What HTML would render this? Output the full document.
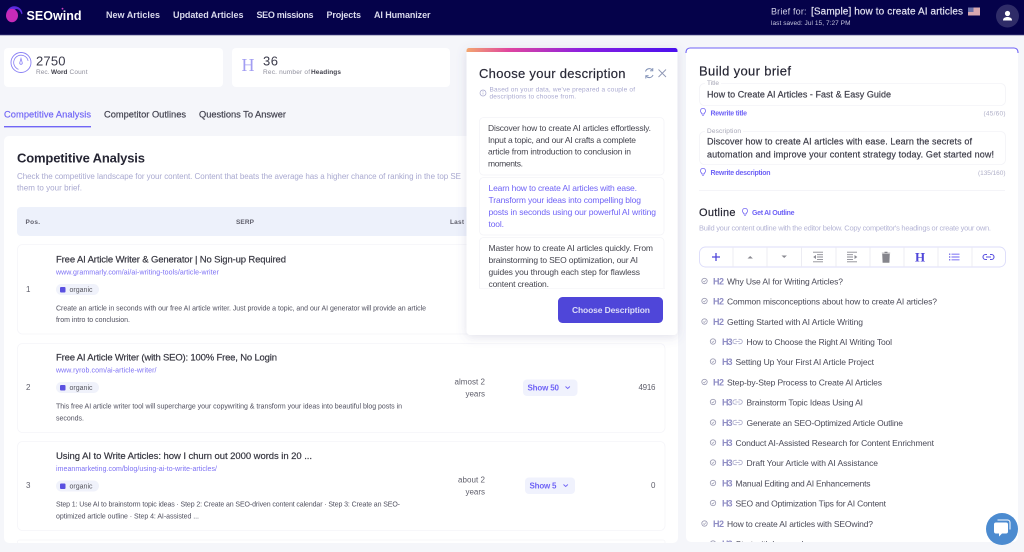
<!DOCTYPE html>
<html lang="en"><head><meta charset="utf-8"><title>SEOwind Brief</title>
<style>
html,body{margin:0;padding:0;width:1024px;height:552px;overflow:hidden;background:#f5f6fa}
svg{display:block;font-family:"Liberation Sans",sans-serif;filter:blur(.25px)}
text{white-space:pre}
.m{stroke-width:.18}
.nav{font-size:9px;font-weight:700;fill:#d9d9ec}
.d{font-size:7px;fill:#50505f}
.u{font-size:7px;fill:#7c70f4}
.t{font-size:9.5px;fill:#35353f;stroke:#35353f}
.o{font-size:8.5px;fill:#45454f}
.op{font-size:8.5px;fill:#6f63f6}
.li{font-size:8.5px;fill:#4a4a58}
.h{font-size:9px;font-weight:700;fill:#8f8dc4}
.g{font-size:7px;fill:#56565f}
.r{font-size:8px;fill:#60606c}
.lb{font-size:6.5px;fill:#a5a5b5}
.p{font-size:7px;font-weight:700;fill:#6f63f6}
.c{font-size:6.5px;fill:#b0b0c8}
</style></head><body>
<svg width="1024" height="552" viewBox="0 0 1024 552" xmlns="http://www.w3.org/2000/svg">
<defs>
<linearGradient id="gr" x1="0" x2="1" y1="0" y2="0"><stop offset="0" stop-color="#f3a66e"/><stop offset=".2" stop-color="#e0459f"/><stop offset=".55" stop-color="#8a1fe0"/><stop offset="1" stop-color="#4a10ee"/></linearGradient>
<clipPath id="cp"><rect x="686" y="48" width="332" height="494"/></clipPath>
<clipPath id="co"><rect x="478" y="236" width="188" height="52"/></clipPath>
<filter id="sh" x="-20%" y="-20%" width="140%" height="140%"><feDropShadow dx="0" dy="2" stdDeviation="5" flood-color="#6a6a9a" flood-opacity=".2"/></filter>
<g id="ck"><circle r="2.7" fill="none" stroke="#9a9ab2" stroke-width=".8"/><path d="M-1.2 .1l.9 .9 1.6-1.8" fill="none" stroke="#9a9ab2" stroke-width=".7"/></g>
<g id="ln"><path d="M3.2-2.2H1.6a2.2 2.2 0 0 0 0 4.4h1.6M5-2.2h1.6a2.2 2.2 0 0 1 0 4.4H5M2-0h4.2" fill="none" stroke="#a8a8c8" stroke-width=".8"/></g>
<g id="bl"><path d="M0-3.6a2.5 2.5 0 0 0-1.4 4.6v.9h2.8v-.9A2.5 2.5 0 0 0 0-3.6zM-1 3.2h2" fill="none" stroke="#7c70f4" stroke-width=".8"/></g>
<g id="og"><rect width="43" height="11" rx="5.5" fill="#f0f2fb"/><rect x="4" y="3" width="5.5" height="5.5" rx="1" fill="#5a50e0"/><text x="13.500" y="8" class="g" textLength="23">organic</text></g>
</defs>

<rect width="1024" height="552" fill="#f5f6fa"/>

<!-- header -->
<rect width="1024" height="35" fill="#05024a"/>
<rect y="34.500" width="1024" height=".8" fill="#3a3878"/>
<path d="M6.500 15a8 8 0 0 1 16-1.500l-1 .8c-1-3.500-3-5.300-5.500-5.300z" fill="#5a2be0"/>
<ellipse cx="12" cy="15.500" rx="6" ry="6.700" fill="#c62bb8"/>
<circle cx="62.500" cy="8.700" r=".9" fill="#d040c0"/>
<text x="26.500" y="20" font-size="12.500" font-weight="700" fill="#fff" textLength="55">SEOwind</text>
<text x="106" y="18" class="nav" textLength="54">New Articles</text>
<text x="173" y="18" class="nav" textLength="70.500">Updated Articles</text>
<text x="256.500" y="18" class="nav" textLength="57">SEO missions</text>
<text x="326.500" y="18" class="nav" textLength="34.500">Projects</text>
<text x="374" y="18" class="nav" textLength="56.500">AI Humanizer</text>
<text x="771" y="14.500" font-size="9" fill="#cfcfe6" textLength="35.500">Brief for:</text>
<text x="811" y="14.500" font-size="10" fill="#e4e4f2" stroke="#e4e4f2" class="m" textLength="152">[Sample] how to create AI articles</text>
<rect x="968" y="7.500" width="12" height="8" fill="#d8a8b0"/>
<rect x="968" y="7.500" width="5.500" height="4.500" fill="#6a70a8"/>
<text x="771" y="25" font-size="6.500" fill="#c5c5de" textLength="79.500">last saved: Jul 15, 7:27 PM</text>
<circle cx="1007.500" cy="16" r="11.500" fill="#2f2c68"/>
<circle cx="1007.500" cy="13.500" r="2.600" fill="#fff"/>
<path d="M1003 20.500c0-2.500 2-3.500 4.500-3.500s4.500 1 4.500 3.500z" fill="#fff"/>

<!-- stat cards -->
<rect x="4" y="48" width="219" height="39" rx="4" fill="#fff"/>
<rect x="232" y="48" width="218" height="39" rx="4" fill="#fff"/>
<circle cx="21" cy="62.500" r="10" fill="none" stroke="#8a80f5" stroke-width=".9"/>
<circle cx="21" cy="62.500" r="7.300" fill="none" stroke="#8a80f5" stroke-width=".8" stroke-dasharray="30 16" transform="rotate(110 21 62.500)"/>
<path d="M21 58.500l1.300 4.500a1.300 1.300 0 0 1-2.600 0z" fill="none" stroke="#8a80f5" stroke-width=".8"/>
<text x="36" y="65.500" font-size="13" fill="#3a3a4a" textLength="29.500">2750</text>
<text x="36" y="74" font-size="6.500" fill="#8f8f9c" textLength="13.500">Rec.</text>
<text x="51" y="74" font-size="6.500" font-weight="700" fill="#44444f" textLength="16.500">Word</text>
<text x="69.500" y="74" font-size="6.500" fill="#8f8f9c" textLength="18">Count</text>
<text x="241.500" y="71" font-family="Liberation Serif" font-size="18" fill="#a29df2" textLength="13">H</text>
<text x="263" y="65.500" font-size="13" fill="#3a3a4a" textLength="15">36</text>
<text x="263" y="74" font-size="6.500" fill="#8f8f9c" textLength="47">Rec. number of</text>
<text x="311" y="74" font-size="6.500" font-weight="700" fill="#44444f" textLength="30">Headings</text>

<!-- tabs -->
<text x="4" y="117.500" font-size="9.300" fill="#7166f6" stroke="#7166f6" class="m" textLength="87">Competitive Analysis</text>
<text x="104" y="117.500" font-size="9.300" fill="#3f3f4c" stroke="#3f3f4c" class="m" textLength="82">Competitor Outlines</text>
<text x="199" y="117.500" font-size="9.300" fill="#3f3f4c" stroke="#3f3f4c" class="m" textLength="87">Questions To Answer</text>
<rect x="4" y="126" width="87" height="1.400" fill="#7166f6"/>

<!-- main card -->
<rect x="4" y="136" width="674" height="407" rx="5" fill="#fff"/>
<text x="17" y="162.500" font-size="13" font-weight="700" fill="#252533" textLength="128">Competitive Analysis</text>
<text x="17" y="179" font-size="8" fill="#a9a9d0" textLength="444">Check the competitive landscape for your content. Content that beats the average has a higher chance of ranking in the top SE</text>
<text x="17" y="190.500" font-size="8" fill="#a9a9d0" textLength="65">them to your brief.</text>
<rect x="17" y="207" width="650" height="29" rx="4" fill="#edf1fb"/>
<text x="25.500" y="224" font-size="6.500" font-weight="700" fill="#60606c" textLength="14.500">Pos.</text>
<text x="236" y="224" font-size="6.500" font-weight="700" fill="#60606c" textLength="18">SERP</text>
<text x="450" y="224" font-size="6.500" font-weight="700" fill="#60606c" textLength="14">Last</text>

<g fill="#fff" stroke="#f5f5f9" stroke-width=".8">
<rect x="17.500" y="244.500" width="647.500" height="89.500" rx="5"/>
<rect x="17.500" y="343.500" width="647.500" height="89" rx="5"/>
<rect x="17.500" y="441.500" width="647.500" height="89" rx="5"/>
<path d="M17.500 543v-1a2 2 0 0 1 2-2h643.500a2 2 0 0 1 2 2v1"/>
</g>

<!-- row 1 -->
<text x="26" y="292" class="r" textLength="3.500">1</text>
<text x="56" y="262.500" class="t m" textLength="230">Free AI Article Writer &amp; Generator | No Sign-up Required</text>
<text x="56" y="274.500" class="u" textLength="163">www.grammarly.com/ai/ai-writing-tools/article-writer</text>
<use href="#og" x="56" y="284"/>
<text x="56" y="310.500" class="d" textLength="370">Create an article in seconds with our free AI article writer. Just provide a topic, and our AI generator will provide an article</text>
<text x="56" y="322" class="d" textLength="74">from intro to conclusion.</text>

<!-- row 2 -->
<text x="26" y="390" class="r" textLength="4.500">2</text>
<text x="56" y="360.500" class="t m" textLength="221">Free AI Article Writer (with SEO): 100% Free, No Login</text>
<text x="56" y="372.500" class="u" textLength="100.500">www.ryrob.com/ai-article-writer/</text>
<use href="#og" x="56" y="382"/>
<text x="56" y="408.500" class="d" textLength="346">This free AI article writer tool will supercharge your copywriting &amp; transform your ideas into beautiful blog posts in</text>
<text x="56" y="420.500" class="d" textLength="28">seconds.</text>
<text x="485" y="384.500" class="r" text-anchor="end" textLength="30.500">almost 2</text>
<text x="485" y="396.500" class="r" text-anchor="end" textLength="19.500">years</text>
<rect x="523" y="379.500" width="54.500" height="16.500" rx="4" fill="#f0f2fd"/>
<text x="527.500" y="390.500" font-size="8" font-weight="700" fill="#6f63f6" textLength="31.500">Show 50</text>
<path d="M565.500 386.500l2.200 2 2.200-2" fill="none" stroke="#6f63f6" stroke-width=".9"/>
<text x="655.500" y="390" class="r" text-anchor="end" textLength="17">4916</text>

<!-- row 3 -->
<text x="26" y="488" class="r" textLength="4.500">3</text>
<text x="56" y="459" class="t m" textLength="256">Using AI to Write Articles: how I churn out 2000 words in 20 ...</text>
<text x="56" y="471" class="u" textLength="161">imeanmarketing.com/blog/using-ai-to-write-articles/</text>
<use href="#og" x="56" y="480.500"/>
<text x="56" y="506.500" class="d" textLength="344">Step 1: Use AI to brainstorm topic ideas · Step 2: Create an SEO-driven content calendar · Step 3: Create an SEO-</text>
<text x="56" y="518.500" class="d" textLength="143">optimized article outline · Step 4: AI-assisted ...</text>
<text x="485" y="482.500" class="r" text-anchor="end" textLength="27">about 2</text>
<text x="485" y="494.500" class="r" text-anchor="end" textLength="19.500">years</text>
<rect x="525" y="477.500" width="50" height="16.500" rx="4" fill="#f0f2fd"/>
<text x="529.500" y="488.500" font-size="8" font-weight="700" fill="#6f63f6" textLength="27">Show 5</text>
<path d="M563.500 484.500l2.200 2 2.200-2" fill="none" stroke="#6f63f6" stroke-width=".9"/>
<text x="655.500" y="488" class="r" text-anchor="end" textLength="4.500">0</text>

<!-- modal -->
<rect x="466.500" y="48" width="211" height="287" rx="4" fill="#fff" filter="url(#sh)"/>
<path d="M466.500 52v-1.500a2.500 2.500 0 0 1 2.500-2.500h206a2.500 2.500 0 0 1 2.500 2.500V52z" fill="url(#gr)"/>
<text x="479" y="78" font-size="13" fill="#2a2a38" stroke="#2a2a38" class="m" textLength="146.500">Choose your description</text>
<path d="M645.500 71.500a4 4 0 0 1 6.800-1.500M653 75a4 4 0 0 1-6.800 1.200" fill="none" stroke="#7f8fb5" stroke-width="1"/>
<path d="M652.800 68v2.800H650M645.800 78.500v-2.800h2.800" fill="none" stroke="#7f8fb5" stroke-width=".9"/>
<path d="M658.500 69.500l7.500 7.500M666 69.500l-7.500 7.500" stroke="#8f97b5" stroke-width=".9"/>
<circle cx="483" cy="93" r="3" fill="none" stroke="#a5a5cc" stroke-width=".7"/>
<path d="M483 92.500v2M483 91v.8" stroke="#a5a5cc" stroke-width=".6"/>
<text x="489.500" y="91.500" font-size="6.500" fill="#a9a9d0" textLength="145.500">Based on your data, we've prepared a couple of</text>
<text x="489.500" y="98.500" font-size="6.500" fill="#a9a9d0" textLength="86.500">descriptions to choose from.</text>

<rect x="479.500" y="117.500" width="184.500" height="57.500" rx="4" fill="#fff" stroke="#f4f4f8" stroke-width=".8"/>
<text x="488" y="131" class="o" textLength="163">Discover how to create AI articles effortlessly.</text>
<text x="488" y="143" class="o" textLength="148">Input a topic, and our AI crafts a complete</text>
<text x="488" y="154.500" class="o" textLength="143">article from introduction to conclusion in</text>
<text x="488" y="166.500" class="o" textLength="35">moments.</text>

<rect x="479.500" y="177.500" width="184.500" height="57.500" rx="4" fill="#fff" stroke="#f4f4f8" stroke-width=".8"/>
<text x="488.500" y="191" class="op" textLength="148.500">Learn how to create AI articles with ease.</text>
<text x="488.500" y="203" class="op" textLength="152.500">Transform your ideas into compelling blog</text>
<text x="488.500" y="215" class="op" textLength="167.500">posts in seconds using our powerful AI writing</text>
<text x="488.500" y="227" class="op" textLength="15.500">tool.</text>

<g clip-path="url(#co)">
<rect x="479.500" y="237.500" width="184.500" height="57.500" rx="4" fill="#fff" stroke="#f4f4f8" stroke-width=".8"/>
<text x="488.500" y="251" class="o" textLength="164.500">Master how to create AI articles quickly. From</text>
<text x="488.500" y="263" class="o" textLength="149.500">brainstorming to SEO optimization, our AI</text>
<text x="488.500" y="275" class="o" textLength="151.500">guides you through each step for flawless</text>
<text x="488.500" y="287" class="o" textLength="60.500">content creation.</text>
</g>
<rect x="479" y="288" width="186" height=".7" fill="#f4f4f8"/>
<rect x="558" y="297" width="105" height="26" rx="4.500" fill="#4f46d9"/>
<text x="572" y="313" font-size="8.500" font-weight="700" fill="#dcdcf8" textLength="78">Choose Description</text>

<!-- right panel -->
<rect x="686" y="48" width="332" height="494" rx="5" fill="#fff"/>
<path d="M686 53v-1a4 4 0 0 1 4-4h324a4 4 0 0 1 4 4v1" fill="none" stroke="#6f63f6" stroke-width="1.100"/>
<text x="699" y="75.500" font-size="13" fill="#252533" stroke="#252533" class="m" textLength="92">Build your brief</text>

<rect x="699.500" y="83.500" width="306" height="22" rx="5" fill="#fff" stroke="#f3f3f7" stroke-width=".8"/>
<rect x="705" y="81" width="16" height="4" fill="#fff"/>
<text x="707" y="85" class="lb" textLength="12">Title</text>
<text x="707" y="97.500" font-size="9" fill="#3c3c48" stroke="#3c3c48" class="m" textLength="184">How to Create AI Articles - Fast &amp; Easy Guide</text>
<use href="#bl" x="703" y="112"/>
<text x="710.500" y="115.500" class="p" textLength="36.500">Rewrite title</text>
<text x="1005.500" y="115.500" class="c" text-anchor="end" textLength="22">(45/60)</text>

<rect x="699.500" y="131.500" width="306" height="33" rx="5" fill="#fff" stroke="#f3f3f7" stroke-width=".8"/>
<rect x="705" y="129" width="38" height="4" fill="#fff"/>
<text x="707" y="133" class="lb" textLength="34">Description</text>
<text x="707" y="144.500" font-size="9" fill="#3c3c48" stroke="#3c3c48" class="m" textLength="265">Discover how to create AI articles with ease. Learn the secrets of</text>
<text x="707" y="157.500" font-size="9" fill="#3c3c48" stroke="#3c3c48" class="m" textLength="287">automation and improve your content strategy today. Get started now!</text>
<use href="#bl" x="703" y="172"/>
<text x="710.500" y="175" class="p" textLength="60">Rewrite description</text>
<text x="1005.500" y="175" class="c" text-anchor="end" textLength="27.500">(135/160)</text>

<rect x="699" y="190" width="306" height=".8" fill="#f2f2f6"/>
<text x="699" y="216" font-size="11" fill="#252533" stroke="#252533" class="m" textLength="36.500">Outline</text>
<use href="#bl" x="745" y="212"/>
<text x="752" y="215" class="p" textLength="42.500">Get AI Outline</text>
<text x="699" y="230.500" font-size="7.500" fill="#b5b5d5" textLength="292">Build your content outline with the editor below. Copy competitor's headings or create your own.</text>

<!-- toolbar -->
<rect x="699.500" y="247" width="306" height="20" rx="6" fill="#fff" stroke="#dcdcfa" stroke-width=".9"/>
<path d="M733 247v20M767 247v20M801.500 247v20M836 247v20M870 247v20M904 247v20M938 247v20M972 247v20" stroke="#ebebf2" stroke-width=".9"/>
<path d="M712 257h8M716 253v8" stroke="#4f46d9" stroke-width="1.300"/>
<path d="M747.500 258.500l2.700-2.500 2.700 2.500z" fill="#8a8a92"/>
<path d="M781.500 255.500l2.700 2.500 2.700-2.500z" fill="#8a8a92"/>
<path d="M813 252.200h10M817 254.700h6M817 257h6M817 259.400h6M813 261.800h10" stroke="#8a8a92" stroke-width=".9"/>
<path d="M816 255l-2.800 2 2.800 2z" fill="#8a8a92"/>
<path d="M847 252.200h10M847 254.700h6M847 257h6M847 259.400h6M847 261.800h10" stroke="#8a8a92" stroke-width=".9"/>
<path d="M854.500 255l2.800 2-2.800 2z" fill="#8a8a92"/>
<path d="M882.500 254h7l-.4 8.500h-6.200zM881.800 253h8.400M884.800 253v-1h2.400v1" fill="#85858c" stroke="#85858c" stroke-width=".6"/>
<text x="920" y="261.500" font-family="Liberation Serif" font-size="13" font-weight="700" fill="#4f46d9" text-anchor="middle">H</text>
<path d="M951.500 254.200h8M951.500 257h8M951.500 259.800h8" stroke="#8a80f5" stroke-width="1.200"/>
<path d="M949 254.200h1.300M949 257h1.300M949 259.800h1.300" stroke="#5a50e0" stroke-width="1.200"/>
<path d="M987 254.500h-1.500a2.500 2.500 0 0 0 0 5h1.500M990 254.500h1.500a2.500 2.500 0 0 1 0 5H990M986 257h5" fill="none" stroke="#5a50e0" stroke-width="1.100"/>

<!-- outline list -->
<g clip-path="url(#cp)">
<use href="#ck" x="704.500" y="281"/><text x="713" y="284.500" class="h" textLength="11">H2</text><text x="727" y="284.500" class="li" textLength="116">Why Use AI for Writing Articles?</text>
<use href="#ck" x="704.500" y="301"/><text x="713" y="304.500" class="h" textLength="11">H2</text><text x="727" y="304.500" class="li" textLength="210">Common misconceptions about how to create AI articles?</text>
<use href="#ck" x="704.500" y="321.500"/><text x="713" y="325" class="h" textLength="11">H2</text><text x="727" y="325" class="li" textLength="136">Getting Started with AI Article Writing</text>
<use href="#ck" x="713" y="341.500"/><text x="722" y="345" class="h" textLength="10.500">H3</text><use href="#ln" x="733.500" y="341.500"/><text x="746.500" y="345" class="li" textLength="145.500">How to Choose the Right AI Writing Tool</text>
<use href="#ck" x="713" y="361.500"/><text x="722" y="365" class="h" textLength="10.500">H3</text><text x="735.500" y="365" class="li" textLength="138.500">Setting Up Your First AI Article Project</text>
<use href="#ck" x="704.500" y="382"/><text x="713" y="385.500" class="h" textLength="11">H2</text><text x="727" y="385.500" class="li" textLength="155">Step-by-Step Process to Create AI Articles</text>
<use href="#ck" x="713" y="402"/><text x="722" y="405.500" class="h" textLength="10.500">H3</text><use href="#ln" x="733.500" y="402"/><text x="746.500" y="405.500" class="li" textLength="116.500">Brainstorm Topic Ideas Using AI</text>
<use href="#ck" x="713" y="422.500"/><text x="722" y="426" class="h" textLength="10.500">H3</text><use href="#ln" x="733.500" y="422.500"/><text x="746.500" y="426" class="li" textLength="156.500">Generate an SEO-Optimized Article Outline</text>
<use href="#ck" x="713" y="442.500"/><text x="722" y="446" class="h" textLength="10.500">H3</text><text x="735.500" y="446" class="li" textLength="198.500">Conduct AI-Assisted Research for Content Enrichment</text>
<use href="#ck" x="713" y="462.500"/><text x="722" y="466" class="h" textLength="10.500">H3</text><use href="#ln" x="733.500" y="462.500"/><text x="746.500" y="466" class="li" textLength="131.500">Draft Your Article with AI Assistance</text>
<use href="#ck" x="713" y="483"/><text x="722" y="486.500" class="h" textLength="10.500">H3</text><text x="735.500" y="486.500" class="li" textLength="135">Manual Editing and AI Enhancements</text>
<use href="#ck" x="713" y="503"/><text x="722" y="506.500" class="h" textLength="10.500">H3</text><text x="735.500" y="506.500" class="li" textLength="150.500">SEO and Optimization Tips for AI Content</text>
<use href="#ck" x="704.500" y="523.500"/><text x="713" y="527" class="h" textLength="11">H2</text><text x="727" y="527" class="li" textLength="146">How to create AI articles with SEOwind?</text>
<use href="#ck" x="713" y="543.500"/><text x="722" y="547" class="h" textLength="10.500">H3</text><text x="735.500" y="547" class="li" textLength="68">Start with keyword</text>
</g>

<!-- chat -->
<circle cx="1002" cy="529" r="16" fill="#4c8bd0"/>
<path d="M994 524.500a2 2 0 0 1 2-2h10a2 2 0 0 1 2 2v7a2 2 0 0 1-2 2h-4l-3 3v-3h-3a2 2 0 0 1-2-2z" fill="#fff"/>
<path d="M997.500 520h10a2.500 2.500 0 0 1 2.500 2.500v7" fill="none" stroke="#fff" stroke-width="1"/>
</svg>
</body></html>
